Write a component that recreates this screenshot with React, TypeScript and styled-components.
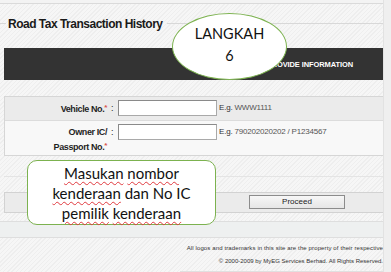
import React from "react";
import styled, { createGlobalStyle } from "styled-components";

const Global = createGlobalStyle`
  html, body { margin: 0; padding: 0; background: #efefef; }
  body { font-family: "Liberation Sans", Arial, sans-serif; color: #222; }
`;

const Page = styled.div`
  position: relative;
  width: 384px;
  height: 272px;
  overflow: hidden;
  background: repeating-linear-gradient(135deg, #f6f6f6 0 2px, #eeeeee 2px 3px);
  border-right: 1px solid #e2e2e2;
  box-sizing: border-box;
  display: flex;
  flex-direction: column;
`;

const TopStrip = styled.div`
  height: 3px;
  background: #f3f3f3;
  border-bottom: 1px solid #dadada;
`;

const TitleRow = styled.div`
  height: 40px;
  display: flex;
  align-items: center;
`;

const TitleLine = styled.div<{ $grow?: boolean }>`
  height: 0;
  border-top: 1px solid #d8d8d8;
  width: 6px;
  flex: ${(p) => (p.$grow ? 1 : "none")};
`;

const Title = styled.h1`
  margin: 0;
  padding: 0 4px 0 2px;
  font-size: 12px;
  font-weight: bold;
  letter-spacing: -0.5px;
  color: #1a1a1a;
  line-height: 14px;
`;

const StepBar = styled.div`
  margin: 5px 0 0 4px;
  height: 32px;
  background: #333333;
  display: flex;
  align-items: center;
  justify-content: flex-end;
  padding-right: 30px;
`;

const StepText = styled.span`
  color: #ffffff;
  font-size: 7.5px;
  font-weight: bold;
  letter-spacing: -0.1px;
`;

const Form = styled.div`
  margin: 16px 0 0 4px;
  border: 1px solid #d6d6d6;
  border-right: none;
`;

const Row = styled.div<{ $alt?: boolean }>`
  display: grid;
  grid-template-columns: 102px 11px 100px 1fr;
  align-items: ${(p) => (p.$alt ? "start" : "center")};
  background: ${(p) => (p.$alt ? "#f8f8f8" : "#ebebeb")};
  height: ${(p) => (p.$alt ? "35px" : "23px")};
  padding-top: ${(p) => (p.$alt ? "3px" : "0")};
  box-sizing: border-box;
  border-top: ${(p) => (p.$alt ? "1px solid #dcdcdc" : "none")};
`;

const Label = styled.div<{ $pt?: number }>`
  text-align: right;
  font-size: 9px;
  font-weight: bold;
  letter-spacing: -0.4px;
  line-height: 14px;
  color: #1f1f1f;
  padding-top: ${(p) => p.$pt ?? 0}px;
`;

const Req = styled.span`
  color: #d9534f;
  font-size: 8px;
  vertical-align: 2px;
`;

const Colon = styled.div<{ $pt?: number }>`
  font-size: 9px;
  padding-left: 4px;
  line-height: 14px;
  padding-top: ${(p) => p.$pt ?? 0}px;
`;

const Input = styled.div`
  width: 99px;
  height: 16px;
  box-sizing: border-box;
  background: #ffffff;
  border: 1px solid #a9a9a9;
  border-top-color: #8a8a8a;
  border-left-color: #8a8a8a;
`;

const Hint = styled.div`
  font-size: 8px;
  letter-spacing: -0.2px;
  color: #333;
  padding-left: 1px;
  line-height: 16px;
  white-space: nowrap;
`;

const HintValue = styled.span`
  color: #555;
`;

const Spacer = styled.div`
  margin: 0 0 0 4px;
  height: 20px;
  border-bottom: 1px solid #e4e4e4;
`;

const ButtonRow = styled.div`
  margin: 15px 0 0 4px;
  height: 22px;
  box-sizing: border-box;
  border: 1px solid #d2d2d2;
  border-right: none;
  background: #ebebeb;
  display: flex;
  align-items: center;
  padding-left: 244px;
`;

const Button = styled.button`
  width: 96px;
  height: 14px;
  padding: 0;
  box-sizing: border-box;
  border: 1px solid #8c8c8c;
  background: linear-gradient(#f7f7f7, #e6e6e6);
  font-family: "Liberation Sans", Arial, sans-serif;
  font-size: 8px;
  color: #222;
  line-height: 12px;
`;

const Band = styled.div`
  margin-top: 8px;
  height: 15px;
  background: #eef0f0;
  border-top: 1px solid #dedede;
  border-bottom: 1px solid #dedede;
`;

const Footer = styled.div`
  margin: 4px 0 0 180px;
  width: 203px;
  white-space: nowrap;
  text-align: right;
  font-size: 6px;
  line-height: 13px;
  color: #333;
  padding-bottom: 3px;
  border-bottom: 1px solid #e0e0e0;
`;

const FooterWide = styled.span`
  letter-spacing: 0.12px;
`;

const Ellipse = styled.div`
  position: absolute;
  left: 172px;
  top: 13px;
  width: 115px;
  height: 67px;
  box-sizing: border-box;
  border-radius: 50%;
  border: 1.5px solid #7cb24f;
  background: #ffffff;
  display: flex;
  flex-direction: column;
  align-items: center;
  justify-content: center;
  padding-bottom: 3px;
  font-family: Lato, "Open Sans", sans-serif;
  font-size: 14.5px;
  line-height: 22px;
  color: #111;
`;

const Callout = styled.div`
  position: absolute;
  left: 27px;
  top: 160px;
  width: 189px;
  height: 65px;
  box-sizing: border-box;
  border-radius: 10px;
  border: 1.5px solid #7cb24f;
  background: #ffffff;
  display: flex;
  flex-direction: column;
  align-items: center;
  justify-content: center;
  font-family: Lato, "Open Sans", sans-serif;
  font-size: 15px;
  line-height: 20px;
  color: #111;
`;

const Spell = styled.span`
  text-decoration: underline wavy #e0393e;
  text-decoration-thickness: 1px;
  text-underline-offset: 2px;
`;

export default function App() {
  return (
    <>
      <Global />
      <Page>
        <TopStrip />
        <TitleRow>
          <TitleLine />
          <Title>Road Tax Transaction History</Title>
          <TitleLine $grow />
        </TitleRow>
        <StepBar>
          <StepText>PROVIDE INFORMATION</StepText>
        </StepBar>
        <Form>
          <Row>
            <Label>
              Vehicle No.<Req>*</Req>
            </Label>
            <Colon>:</Colon>
            <Input />
            <Hint>
              E.g. <HintValue>WWW1111</HintValue>
            </Hint>
          </Row>
          <Row $alt>
            <Label $pt={1}>
              Owner IC/
              <br />
              Passport No.<Req>*</Req>
            </Label>
            <Colon $pt={1}>:</Colon>
            <Input />
            <Hint>
              E.g. <HintValue>790202020202 / P1234567</HintValue>
            </Hint>
          </Row>
        </Form>
        <Spacer />
        <ButtonRow>
          <Button type="button">Proceed</Button>
        </ButtonRow>
        <Band />
        <Footer>
          <FooterWide>All logos and trademarks in this site are the property of their respective</FooterWide>
          <br />© 2000-2009 by MyEG Services Berhad. All Rights Reserved.
        </Footer>
        <Ellipse>
          <span>LANGKAH</span>
          <span>6</span>
        </Ellipse>
        <Callout>
          <span>
            <Spell>Masukan</Spell> <Spell>nombor</Spell>
          </span>
          <span>
            <Spell>kenderaan</Spell> dan No IC
          </span>
          <span>
            <Spell>pemilik</Spell> <Spell>kenderaan</Spell>
          </span>
        </Callout>
      </Page>
    </>
  );
}
